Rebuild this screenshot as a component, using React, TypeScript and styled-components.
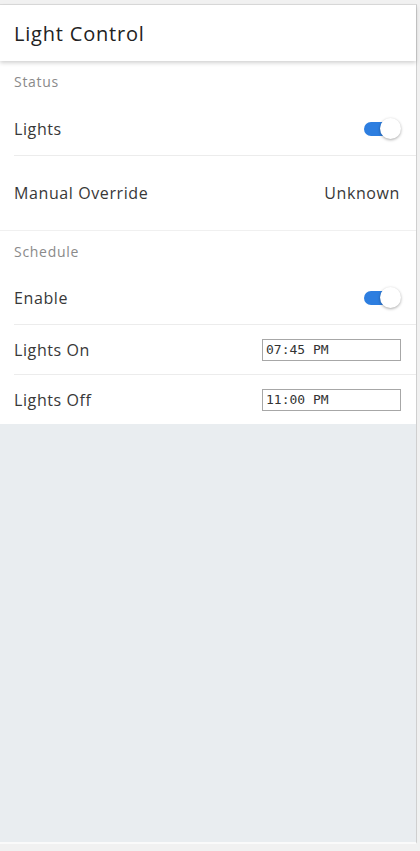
import React from "react";
import styled, { createGlobalStyle } from "styled-components";

const Global = createGlobalStyle`
  html, body { margin: 0; padding: 0; }
  body {
    background: #f1f1f1;
    font-family: "Open Sans", "Liberation Sans", sans-serif;
    color: #333;
  }
`;

const Frame = styled.div`
  margin-top: 4px;
  width: 417px;
  height: 840px;
  box-sizing: border-box;
  border-top: 1px solid #dcdcdc;
  border-right: 1px solid #cfcfcf;
  border-bottom: 2px solid #fafafa;
  background: #e9edf0;
  display: flex;
  flex-direction: column;
`;

const Header = styled.header`
  height: 56px;
  flex: none;
  background: #fff;
  display: flex;
  align-items: center;
  padding: 0 14px;
  box-shadow: 0 2px 4px rgba(0, 0, 0, 0.18);
  position: relative;
  z-index: 1;
`;

const Title = styled.h1`
  margin: 0;
  font-size: 20px;
  font-weight: 400;
  color: #222;
  letter-spacing: 0.8px;
`;

const Content = styled.main`
  background: #fff;
  display: flex;
  flex-direction: column;
`;

const SectionHeader = styled.div<{ $h: number; $border?: boolean }>`
  height: ${(p) => p.$h}px;
  display: flex;
  align-items: center;
  padding: 0 14px;
  font-size: 14px;
  color: #8a8a8a;
  letter-spacing: 0.7px;
  border-top: ${(p) => (p.$border ? "1px solid #f0f0f0" : "none")};
`;

const Row = styled.div<{ $h: number; $divider?: boolean }>`
  height: ${(p) => p.$h}px;
  margin-left: 14px;
  padding-right: 15px;
  display: flex;
  align-items: center;
  justify-content: space-between;
  border-bottom: ${(p) => (p.$divider ? "1px solid #ececec" : "none")};
`;

const Label = styled.span`
  font-size: 16px;
  color: #383838;
  letter-spacing: 0.6px;
`;

const Value = styled.span`
  font-size: 16px;
  color: #383838;
  letter-spacing: 0.6px;
  margin-right: 1px;
`;

const Toggle = styled.div`
  position: relative;
  width: 37px;
  height: 22px;
`;

const Track = styled.div`
  position: absolute;
  left: 0;
  top: 4px;
  width: 34px;
  height: 14px;
  border-radius: 7px;
  background: #2d7ee0;
`;

const Thumb = styled.div`
  position: absolute;
  right: 0;
  top: 0;
  width: 21px;
  height: 21px;
  border-radius: 50%;
  background: #fff;
  box-shadow: 0 1px 3px rgba(0, 0, 0, 0.35);
`;

const TimeBox = styled.input`
  width: 139px;
  height: 22px;
  box-sizing: border-box;
  border: 1px solid #a7a7a7;
  padding: 0 3px;
  font-family: "DejaVu Sans Mono", "Liberation Mono", monospace;
  font-size: 13px;
  color: #333;
  background: #fff;
  outline: none;
`;

function Switch() {
  return (
    <Toggle>
      <Track />
      <Thumb />
    </Toggle>
  );
}

export default function App() {
  return (
    <>
      <Global />
      <Frame>
        <Header>
          <Title>Light Control</Title>
        </Header>
        <Content>
          <SectionHeader $h={41}>Status</SectionHeader>
          <Row $h={53} $divider>
            <Label>Lights</Label>
            <Switch />
          </Row>
          <Row $h={74}>
            <Label>Manual Override</Label>
            <Value>Unknown</Value>
          </Row>
          <SectionHeader $h={41} $border>Schedule</SectionHeader>
          <Row $h={52} $divider>
            <Label>Enable</Label>
            <Switch />
          </Row>
          <Row $h={49} $divider>
            <Label>Lights On</Label>
            <TimeBox readOnly value="07:45 PM" />
          </Row>
          <Row $h={49}>
            <Label>Lights Off</Label>
            <TimeBox readOnly value="11:00 PM" />
          </Row>
        </Content>
      </Frame>
    </>
  );
}
